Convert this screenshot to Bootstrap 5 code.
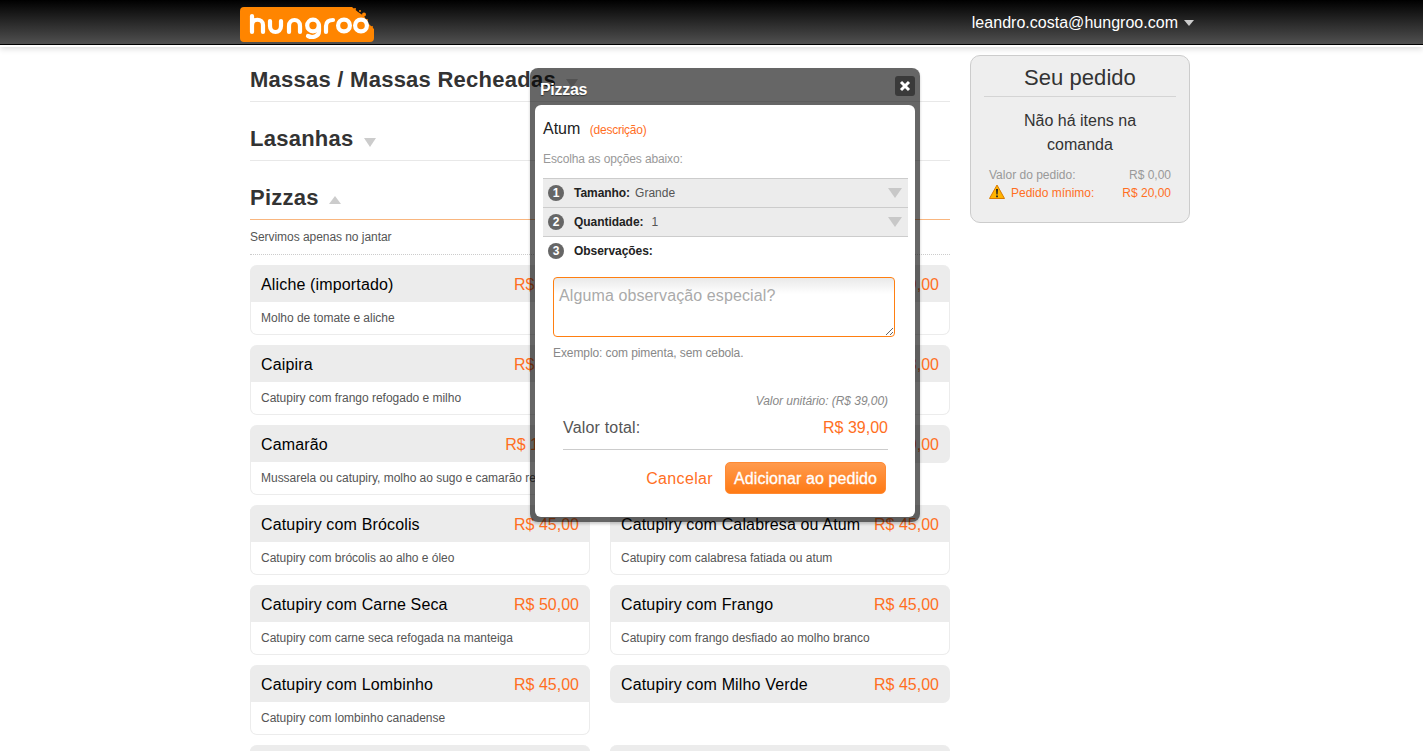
<!DOCTYPE html>
<html lang="pt-BR">
<head>
<meta charset="utf-8">
<title>Hungroo</title>
<link rel="stylesheet" href="https://cdn.jsdelivr.net/npm/bootstrap@5.3.0/dist/css/bootstrap.min.css">
<style>
html,body{height:751px;overflow:hidden}
body{font-family:"Liberation Sans",Arial,sans-serif;color:#333;background:#fff;position:relative}
.topbar{height:45px;background:linear-gradient(#000,#505050);border-bottom:1px solid #000;box-shadow:0 1px 0 #fff,0 1px 0 1px #fff,0 4px 6px rgba(0,0,0,.14)}
.shell{width:950px;margin-left:240px}
.topbar .shell{height:44px}
.logo{width:135px;height:35px;margin-top:5px;flex:none}
.user{color:#fff;font-size:16px;letter-spacing:.02px;margin-right:-4px;gap:6px;padding-top:1px}
.caret-d{width:0;height:0;border-left:5.5px solid transparent;border-right:5.5px solid transparent;border-top:6px solid #ccc;display:inline-block}
.caret-u{width:0;height:0;border-left:6px solid transparent;border-right:6px solid transparent;border-bottom:8px solid #ccc;display:inline-block}
.menu-col{width:700px;margin-left:10px;flex:none;padding-top:1px}
.side-col{width:220px;margin-left:20px;flex:none;padding-top:10px}
.cat{height:59px;border-bottom:1px solid #e8e8e8;display:flex;align-items:flex-end;padding-bottom:5px}
.cat-head{display:flex;align-items:center;gap:10px;height:32px}
.cat h2{font-size:22px;font-weight:700;margin:0;line-height:32px;color:#333;letter-spacing:.25px}
.cat .caret-d{border-left-width:6px;border-right-width:6px;border-top-width:9px;margin-top:6px}
.cat .caret-u{margin-top:4px}
.cat.first{height:56px}
.cat.open{border-bottom-color:#f9b67f}
.cat-note{font-size:12px;color:#555;height:35px;line-height:34px;border-bottom:1px dotted #ccc;margin-bottom:10px;letter-spacing:-.05px}
.dishes{display:grid;grid-template-columns:340px 340px;column-gap:20px;row-gap:10px;align-items:start;grid-auto-rows:70px}
.dish{border:1px solid #ececec;border-top:0;border-radius:7px;background:#fff;height:70px}
.dish-top{background:#ececec;height:37px;margin:0 -1px;border-radius:7px 7px 0 0;padding:2px 11px 0;display:flex;justify-content:space-between;align-items:center;font-size:16px;color:#000;letter-spacing:.15px}
.dish-top b{font-weight:400;color:#ff6f1f;letter-spacing:0}
.dish-body{font-size:12px;color:#555;padding:0 10px;line-height:32px;white-space:nowrap;overflow:hidden;letter-spacing:-.02px}
.dish.bare{border:0;height:38px}
.dish.bare .dish-top{margin:0;border-radius:7px;height:38px}
.order{height:168px;background:#eee;border:1px solid #ccc;border-radius:10px;padding:0 10px;text-align:center}
.order h3{font-size:22px;font-weight:400;line-height:44px;height:41px;border-bottom:1px solid #d4d4d4;margin:0 3px;letter-spacing:.05px}
.order p{font-size:16px;line-height:24px;margin:12px 0 0;padding:0 20px}
.sumline{font-size:12px;display:flex;justify-content:space-between;line-height:18px;padding:0 8px;text-align:left;color:#999}
.sumline.warn{color:#ff6f1f}
.sum{margin-top:9px}
.warn-ico{width:16px;height:16px;margin-right:6px;vertical-align:-3px}
.popup{position:absolute;left:530px;top:68px;width:390px;height:454px;background:rgba(0,0,0,.6);border-radius:8px;padding:37px 5px 5px;box-shadow:0 2px 3px rgba(0,0,0,.2)}
.popup-title{position:absolute;left:10px;top:12px;font-size:16px;font-weight:700;color:#fff;line-height:20px;text-shadow:0 1px 1px rgba(0,0,0,.5);letter-spacing:-.3px}
.popup-x{position:absolute;right:5px;top:8px;width:20px;height:20px;background:#3a3a3a;border-radius:3px;display:flex;align-items:center;justify-content:center}
.popup-in{background:#fff;border-radius:6px;height:412px;padding:0 7px 0 8px;color:#333}
.item-name{font-size:16px;line-height:20px;padding-top:14px;color:#222}
.item-name a{font-size:12px;color:#ff6f1f;text-decoration:none;margin-left:5px;letter-spacing:-.25px}
.hint{font-size:12px;color:#999;line-height:16px;margin-top:11px;height:27px;letter-spacing:-.12px}
.opt{height:29px;border-top:1px solid #ccc;background:#ececec;display:flex;align-items:center;font-size:12px;padding:0 6px 0 5px;color:#555}
.opt.plain{background:none;border-top-color:#ccc}
.opt strong{color:#222;margin-right:5px;letter-spacing:-.05px}
.opt.q strong{margin-right:8px}
.num{width:16px;height:16px;border-radius:50%;background:#666;color:#fff;font-size:12px;font-weight:700;display:inline-flex;align-items:center;justify-content:center;margin-right:10px;line-height:1}
.opt .caret-d{margin-left:auto;border-left-width:7px;border-right-width:7px;border-top-width:10px;border-top-color:#c8c8c8}
.note{display:block;width:342px;height:60px;margin:12px 0 0 10px;padding:6px 5px;border:1px solid #ff7f11;border-radius:4px;font-size:16px;line-height:24px;font-family:inherit;background:linear-gradient(#e9e9e9,#fff 16px);outline:0;color:#333;letter-spacing:.11px}
.note::placeholder{color:#aaa;opacity:1}
.example{font-size:12px;color:#888;margin:8px 0 0 10px;line-height:16px;letter-spacing:-.09px}
.unit{font-size:12px;font-style:italic;color:#888;text-align:right;margin:32px 20px 0 0;line-height:16px;letter-spacing:-.05px}
.total{display:flex;justify-content:space-between;margin:7px 20px 0 20px;height:34px;border-bottom:1px solid #ccc;font-size:16px;line-height:24px;color:#555}
.total span{letter-spacing:.18px}
.total b{font-weight:400;color:#ff6f1f}
.acts{display:flex;justify-content:flex-end;align-items:center;margin:12px 22px 0 0;gap:12px}
.acts a{font-size:16px;color:#ff6f1f;text-decoration:none;letter-spacing:.35px;padding-top:2px}
.acts .go{background:linear-gradient(#ff9a4d,#ff7a14);border:1px solid #ff8a33;border-radius:5px;color:#fff;font-size:16px;font-weight:400;padding:1px 8px 0;height:32px;line-height:30px;-webkit-text-stroke:.3px #fff;letter-spacing:.08px}
</style>
</head>
<body>
<header class="topbar">
  <div class="shell d-flex justify-content-between align-items-center">
    <svg class="logo" viewBox="0 0 135 35" role="img" aria-label="hungroo">
      <path d="M4 0H112L118 5L124 9L128 16L134 22V31a4 4 0 0 1-4 4H4a4 4 0 0 1-4-4V4a4 4 0 0 1 4-4z" fill="#ff8500"/>
      <g fill="#ff8500"><circle cx="115" cy="2" r="1"/><circle cx="120" cy="4" r="1"/><circle cx="124" cy="7.500" r="2"/><circle cx="127" cy="13" r="1"/><circle cx="132" cy="20" r="1"/></g>
      <g fill="none" stroke="#fff" stroke-width="4.200" stroke-linecap="round" stroke-linejoin="round">
        <path d="M12 9V25M12 18c0-7 11-7 11 0v7"/>
        <path d="M30 14v5c0 8 11 8 11 0v-5"/>
        <path d="M49 25V19c0-8 11-8 11 0v6"/>
        <circle cx="73" cy="18.500" r="5.800"/>
        <path d="M79 18.500V24c0 6-7 7-11 5"/>
        <path d="M86 25V19c0-4 3-6 7-6"/>
        <circle cx="104" cy="18.500" r="5.900"/>
        <circle cx="121" cy="18.500" r="5.900"/>
      </g>
    </svg>
    <div class="user d-flex align-items-center"><span>leandro.costa@hungroo.com</span><i class="caret-d"></i></div>
  </div>
</header>
<div class="shell d-flex">
  <main class="menu-col">
    <div class="cat first"><div class="cat-head"><h2>Massas / Massas Recheadas</h2><i class="caret-d"></i></div></div>
    <div class="cat"><div class="cat-head"><h2>Lasanhas</h2><i class="caret-d"></i></div></div>
    <div class="cat open"><div class="cat-head"><h2>Pizzas</h2><i class="caret-u"></i></div></div>
    <div class="cat-note">Servimos apenas no jantar</div>
    <div class="dishes">
      <div class="dish"><div class="dish-top"><span>Aliche (importado)</span><b>R$ 45,00</b></div><div class="dish-body">Molho de tomate e aliche</div></div>
      <div class="dish"><div class="dish-top"><span></span><b>R$ 39,00</b></div></div>
      <div class="dish"><div class="dish-top"><span>Caipira</span><b>R$ 45,00</b></div><div class="dish-body">Catupiry com frango refogado e milho</div></div>
      <div class="dish"><div class="dish-top"><span></span><b>R$ 43,00</b></div></div>
      <div class="dish"><div class="dish-top"><span>Camarão</span><b>R$ 100,00</b></div><div class="dish-body">Mussarela ou catupiry, molho ao sugo e camarão refogado</div></div>
      <div class="dish bare"><div class="dish-top"><span></span><b>R$ 40,00</b></div></div>
      <div class="dish"><div class="dish-top"><span>Catupiry com Brócolis</span><b>R$ 45,00</b></div><div class="dish-body">Catupiry com brócolis ao alho e óleo</div></div>
      <div class="dish"><div class="dish-top"><span>Catupiry com Calabresa ou Atum</span><b>R$ 45,00</b></div><div class="dish-body">Catupiry com calabresa fatiada ou atum</div></div>
      <div class="dish"><div class="dish-top"><span>Catupiry com Carne Seca</span><b>R$ 50,00</b></div><div class="dish-body">Catupiry com carne seca refogada na manteiga</div></div>
      <div class="dish"><div class="dish-top"><span>Catupiry com Frango</span><b>R$ 45,00</b></div><div class="dish-body">Catupiry com frango desfiado ao molho branco</div></div>
      <div class="dish"><div class="dish-top"><span>Catupiry com Lombinho</span><b>R$ 45,00</b></div><div class="dish-body">Catupiry com lombinho canadense</div></div>
      <div class="dish bare"><div class="dish-top"><span>Catupiry com Milho Verde</span><b>R$ 45,00</b></div></div>
      <div class="dish"><div class="dish-top"></div></div>
      <div class="dish"><div class="dish-top"></div></div>
    </div>
  </main>
  <aside class="side-col">
    <div class="order">
      <h3>Seu pedido</h3>
      <p>Não há itens na comanda</p>
      <div class="sum">
        <div class="sumline"><span>Valor do pedido:</span><span>R$ 0,00</span></div>
        <div class="sumline warn"><span><svg class="warn-ico" viewBox="0 0 16 16"><path d="M8 1 15.500 14.500H.5z" fill="#ffb400" stroke="#d97a00"/><path d="M7 5h2l-.4 5.500H7.400zM7.100 11.500h1.800v1.800H7.100z" fill="#222"/></svg>Pedido mínimo:</span><span>R$ 20,00</span></div>
      </div>
    </div>
  </aside>
</div>
<section class="popup">
  <div class="popup-title">Pizzas</div>
  <div class="popup-x"><svg width="12" height="12" viewBox="0 0 12 12"><path d="M2 2l8 8M10 2l-8 8" stroke="#fff" stroke-width="3"/></svg></div>
  <div class="popup-in">
    <div class="item-name">Atum <a href="#">(descrição)</a></div>
    <div class="hint">Escolha as opções abaixo:</div>
    <div class="opt"><span class="num">1</span><strong>Tamanho:</strong>Grande<i class="caret-d"></i></div>
    <div class="opt q"><span class="num">2</span><strong>Quantidade:</strong>1<i class="caret-d"></i></div>
    <div class="opt plain"><span class="num">3</span><strong>Observações:</strong></div>
    <textarea class="note" placeholder="Alguma observação especial?"></textarea>
    <div class="example">Exemplo: com pimenta, sem cebola.</div>
    <div class="unit">Valor unitário: (R$ 39,00)</div>
    <div class="total"><span>Valor total:</span><b>R$ 39,00</b></div>
    <div class="acts"><a href="#">Cancelar</a><button class="go" type="button">Adicionar ao pedido</button></div>
  </div>
</section>
<script src="https://cdn.jsdelivr.net/npm/bootstrap@5.3.0/dist/js/bootstrap.bundle.min.js"></script>
</body>
</html>
